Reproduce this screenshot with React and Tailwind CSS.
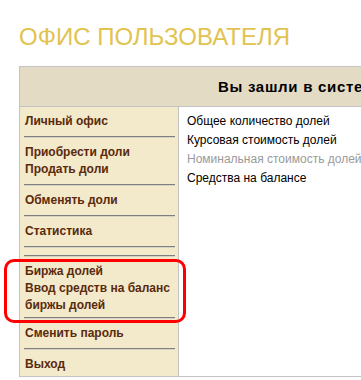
import React from "react";

const groups = [
  ["Личный офис"],
  ["Приобрести доли", "Продать доли"],
  ["Обменять доли"],
  ["Статистика"],
  [],
  ["Биржа долей", "Ввод средств на баланс", "биржы долей"],
  ["Сменить пароль"],
  ["Выход"],
];

const info = [
  { text: "Общее количество долей", muted: false },
  { text: "Курсовая стоимость долей", muted: false },
  { text: "Номинальная стоимость долей", muted: true },
  { text: "Средства на балансе", muted: false },
];

const Divider = () => (
  <div className="ml-[4px] mr-[3px] my-[3px] h-[2px] border-t border-b border-t-[#7f7f7f] border-b-[#d6d2c4]" />
);

export default function App() {
  return (
    <div className="relative w-[361px] h-[380px] overflow-hidden bg-white font-['Liberation_Sans',Arial,sans-serif]">
      {/* заголовок */}
      <h1 className="pl-[19px] pt-[25px] text-[24px] leading-[24px] text-[#e2c34f] whitespace-nowrap">
        ОФИС ПОЛЬЗОВАТЕЛЯ
      </h1>

      <div className="mt-[17px] ml-[19px] w-[700px] border border-[#c3c3c3]">
        <div className="h-[40px] bg-[#e3dbc3] border-b border-[#c3c3c3] pl-[198px] text-[15px] leading-[40px] font-bold tracking-[0.7px] text-black whitespace-nowrap">
          Вы зашли в систему
        </div>

        <div className="flex">
          {/* меню */}
          <div className="w-[159px] shrink-0 bg-[#f3e9cb] border-r border-[#c3c3c3] pt-[3px]">
            {groups.map((g, i) => (
              <React.Fragment key={i}>
                {g.length > 0 ? (
                  <div className={`pt-[3px] pl-[5px] ${g.length > 2 ? "pb-0" : "pb-[3px]"}`}>
                    {g.map((t) => (
                      <div key={t} className="text-[12px] leading-[17px] font-bold text-[#5a2a0c] whitespace-nowrap">
                        {t}
                      </div>
                    ))}
                  </div>
                ) : (
                  <div className="h-[1px]" />
                )}
                {i < groups.length - 1 && <Divider />}
              </React.Fragment>
            ))}
          </div>

          {/* информация */}
          <div className="flex-1 pt-[5px] pl-[8px]">
            {info.map((r) => (
              <div
                key={r.text}
                className={`text-[12px] leading-[19px] whitespace-nowrap ${r.muted ? "text-[#9a9a9a]" : "text-black"}`}
              >
                {r.text}
              </div>
            ))}
          </div>
        </div>
      </div>

      {/* выделение */}
      <div className="absolute left-[4px] top-[259px] w-[182px] h-[64px] border-[3px] border-[#ff0000] rounded-[10px]" />
    </div>
  );
}
